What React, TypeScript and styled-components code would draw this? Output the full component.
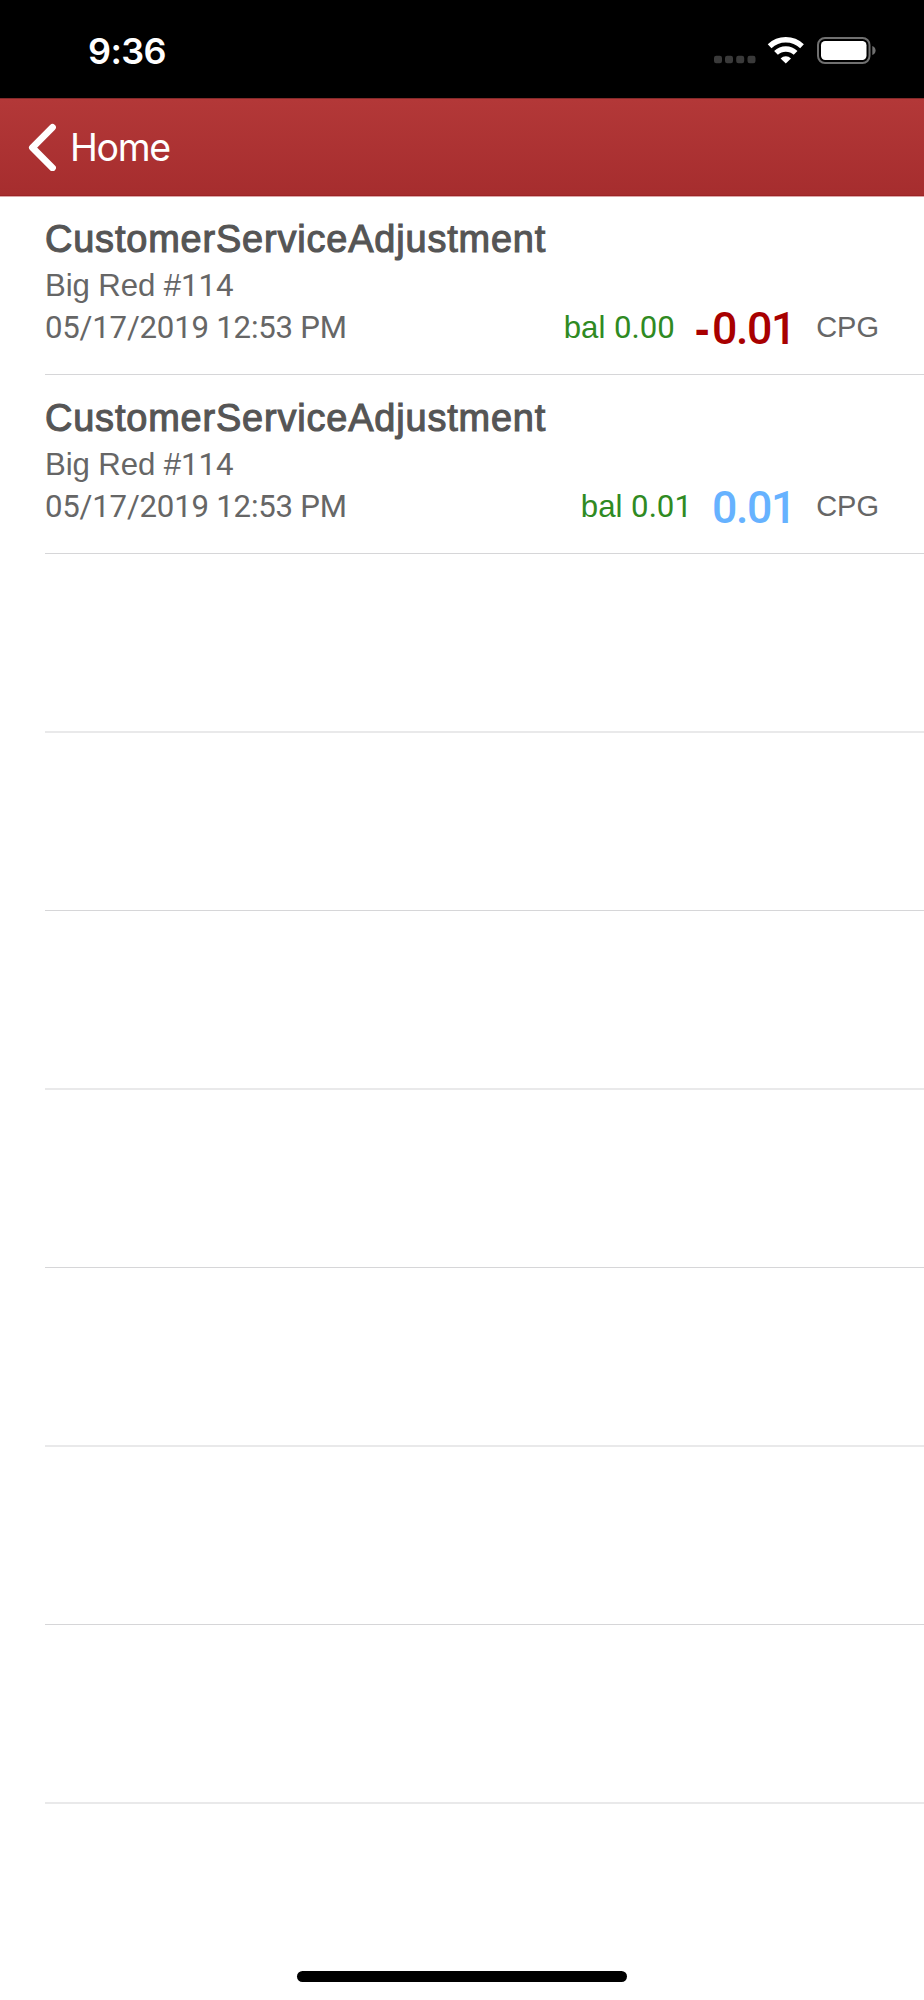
import React from 'react';
import styled, { createGlobalStyle } from 'styled-components';

const GlobalStyle = createGlobalStyle`
  * { box-sizing: border-box; }
  body { margin: 0; background: #fff; }
`;

const Screen = styled.div`
  width: 924px;
  height: 2000px;
  display: flex;
  flex-direction: column;
  background: #fff;
  overflow: hidden;
  font-family: 'Liberation Sans', Arial, sans-serif;
`;

const StatusBar = styled.header`
  flex: none;
  height: 98px;
  display: flex;
  align-items: center;
  justify-content: space-between;
  padding: 2px 48px 0 88px;
  background: #000;
  color: #fff;
`;

const Clock = styled.time`
  padding-top: 1px;
  font: 600 36px/44px Inter, sans-serif;
  letter-spacing: -0.6px;
`;

const StatusIcons = styled.svg`
  display: block;
  width: 164px;
  height: 30px;
`;

const NavBar = styled.nav`
  flex: none;
  height: 98px;
  display: flex;
  align-items: center;
  padding-left: 28px;
  background: linear-gradient(#b33838, #a62d2e);
  border-top: 1px solid #842a2b;
  border-bottom: 1px solid #9c2426;
  box-shadow: 0 1px 0 #dca6a7;
`;

const BackButton = styled.button`
  display: flex;
  align-items: center;
  gap: 14px;
  border: 0;
  padding: 0;
  background: none;
  color: #fff;
  font: 400 37.5px/48px Inter, sans-serif;
  letter-spacing: -1.3px;
`;

const BackLabel = styled.span`
  padding-top: 2px;
`;

const Chevron = styled.svg`
  display: block;
  width: 28px;
  height: 48px;
`;

const List = styled.ul`
  flex: 1;
  margin: 0;
  padding: 0 0 0 45px;
  list-style: none;
`;

const Row = styled.li`
  height: 179px;
  padding: 21px 45px 0 0;
  border-bottom: 1px solid #d6d6d8;
`;

const EmptyRow = styled.li<{ $soft: boolean }>`
  height: ${({ $soft }) => ($soft ? 179 : 178)}px;
  border-bottom: ${({ $soft }) => ($soft ? '2px solid #e9e9ea' : '1px solid #d6d6d8')};
`;

const Title = styled.h2`
  margin: 0;
  font-size: 37.9px;
  font-weight: 400;
  line-height: 44px;
  letter-spacing: 0.84px;
  color: #555;
  -webkit-text-stroke: 1.1px #555;
`;

const Place = styled.div`
  margin-top: 5px;
  font-size: 31.2px;
  line-height: 40px;
  height: 40px;
  letter-spacing: -0.1px;
  color: #666;
`;

const Footer = styled.div`
  display: flex;
  align-items: center;
  height: 42px;
  line-height: 42px;
  color: #666;
`;

const Digits = styled.span`
  font-family: Roboto, sans-serif;
`;

const Stamp = styled.time`
  flex: 1;
  padding-top: 1px;
  font: 31.2px/42px Roboto, sans-serif;
  letter-spacing: -0.22px;
`;

const Balance = styled.span`
  padding-top: 2px;
  font-size: 31.2px;
  color: #2f8a22;
`;

const Amount = styled.strong<{ $negative: boolean }>`
  margin-left: 20px;
  padding-top: 3px;
  font: 500 44.6px/42px Roboto, sans-serif;
  letter-spacing: -1.3px;
  color: ${({ $negative }) => ($negative ? '#a80000' : '#66b2ff')};
`;

const Minus = styled.span`
  font-family: 'Liberation Sans', Arial, sans-serif;
  font-weight: 700;
  letter-spacing: 2.2px;
`;

const Unit = styled.span`
  margin-left: 21px;
  font-size: 29px;
`;

const HomeIndicator = styled.div`
  flex: none;
  align-self: center;
  width: 330px;
  height: 11px;
  margin-bottom: 18px;
  border-radius: 6px;
  background: #000;
`;

const transactions = [
  { title: 'CustomerServiceAdjustment', place: 'Big Red #', no: '114', when: '05/17/2019 12:53 PM', balance: '0.00', negative: true, amount: '0.01', unit: 'CPG' },
  { title: 'CustomerServiceAdjustment', place: 'Big Red #', no: '114', when: '05/17/2019 12:53 PM', balance: '0.01', negative: false, amount: '0.01', unit: 'CPG' },
];

const emptyRows = [0, 1, 2, 3, 4, 5, 6];

export default function App() {
  return (
    <Screen>
      <GlobalStyle />
      <StatusBar>
        <Clock>9:36</Clock>
        <StatusIcons viewBox="712 35 164 30">
          <g fill="#3a3a3a">
            <rect x="714" y="55.8" width="8" height="7.5" rx="2.2" />
            <rect x="725" y="55.8" width="8" height="7.5" rx="2.2" />
            <rect x="736.2" y="55.8" width="8" height="7.5" rx="2.2" />
            <rect x="747.5" y="55.8" width="8" height="7.5" rx="2.2" />
          </g>
          <g fill="none" stroke="#fff" strokeWidth="5.4">
            <path d="M769.6 46.2a23.6 23.6 0 0 1 32.4 0" />
            <path d="M776 52.9a14.2 14.2 0 0 1 19.6 0" />
          </g>
          <path d="M785.8 63.6l-5.2-5.2a7.6 7.6 0 0 1 10.4 0z" fill="#fff" />
          <rect x="818" y="38" width="51.5" height="25" rx="7" fill="none" stroke="#707070" strokeWidth="2" />
          <rect x="821" y="41" width="45.5" height="19" rx="4.2" fill="#fff" />
          <path d="M872.3 46c4.4 1.6 4.4 7.5 0 9z" fill="#707070" />
        </StatusIcons>
      </StatusBar>
      <NavBar>
        <BackButton>
          <Chevron viewBox="0 0 28 48" fill="none" stroke="#fff" strokeWidth="6.8" strokeLinecap="round" strokeLinejoin="round">
            <path d="M24.5 4.4L4.4 24.6L24.5 44.8" />
          </Chevron>
          <BackLabel>Home</BackLabel>
        </BackButton>
      </NavBar>
      <List>
        {transactions.map((t, i) => (
          <Row key={i}>
            <Title>{t.title}</Title>
            <Place>{t.place}<Digits>{t.no}</Digits></Place>
            <Footer>
              <Stamp>{t.when}</Stamp>
              <Balance>bal <Digits>{t.balance}</Digits></Balance>
              <Amount $negative={t.negative}>{t.negative && <Minus>-</Minus>}{t.amount}</Amount>
              <Unit>{t.unit}</Unit>
            </Footer>
          </Row>
        ))}
        {emptyRows.map((n) => (
          <EmptyRow key={n} $soft={n % 2 === 0} />
        ))}
      </List>
      <HomeIndicator />
    </Screen>
  );
}
